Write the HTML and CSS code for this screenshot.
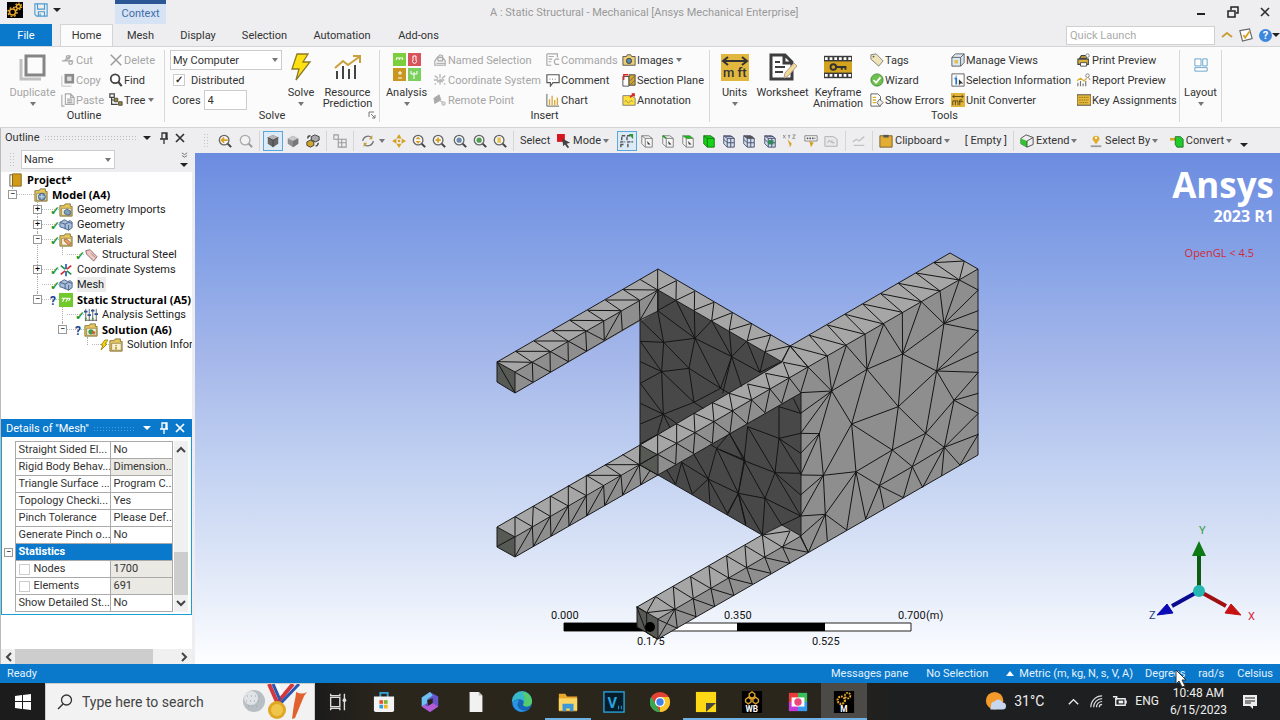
FILE: index.html
```html
<!DOCTYPE html>
<html lang="en">
<head>
    <meta charset="UTF-8">
    <meta name="viewport" content="width=device-width, initial-scale=1.0">
    <title>A : Static Structural - Mechanical [Ansys Mechanical Enterprise]</title>
    <link rel="stylesheet" href="styles.css">
</head>
<body>

    <!-- shared icons -->
    <svg class="sprite" aria-hidden="true">
        <symbol id="gears" viewBox="0 0 16 16">
            <rect width="16" height="16" fill="#000"/>
            <circle cx="5.500" cy="10" r="3" fill="none" stroke="#e7a72c" stroke-width="1.500"/>
            <circle cx="5.500" cy="10" r="4.500" fill="none" stroke="#e7a72c" stroke-width="1.500" stroke-dasharray="1.800 1.730"/>
            <circle cx="11.500" cy="4.500" r="2" fill="none" stroke="#e7a72c" stroke-width="1.400"/>
            <circle cx="11.500" cy="4.500" r="3.300" fill="none" stroke="#e7a72c" stroke-width="1.200" stroke-dasharray="1.500 1.460"/>
        </symbol>
        <symbol id="save" viewBox="0 0 16 16"><path d="M1 1h14v14H3l-2-2zM4 1v6h8V1M5 15v-5h7v5M7 12v3" fill="none" stroke="#4a9bd0" stroke-width="1.300"/></symbol>
        <symbol id="duplicate" viewBox="0 0 28 28"><path d="M2 6v20h20" fill="none" stroke="#c0c0c0" stroke-width="3"/><path d="M7 3h18v19H7z" fill="#fbfbfb" stroke="#858585" stroke-width="3"/></symbol>
        <symbol id="cut" viewBox="0 0 16 16"><path d="M1 9h13M4 9l7-6" stroke="#aaa" stroke-width="1.600"/><circle cx="8" cy="5" r="2" fill="none" stroke="#aaa" stroke-width="1.500"/><circle cx="11" cy="11" r="2" fill="none" stroke="#aaa" stroke-width="1.500"/></symbol>
        <symbol id="copy" viewBox="0 0 16 16"><path d="M1 3v12h11" fill="none" stroke="#bbb"/><path d="M4 1h11v11H4z" fill="#8c8c8c"/><path d="M7 4h5v5H7z" fill="#ddd"/></symbol>
        <symbol id="paste" viewBox="0 0 16 16"><path d="M1 2v13h3M5 1h6l4 4v8H5zM11 1v4h4M7 7h6M7 9h6M7 11h6" fill="none" stroke="#aaa" stroke-width="1.300"/></symbol>
        <symbol id="delete" viewBox="0 0 16 16"><path d="M2 2l12 12M14 2L2 14" stroke="#9c9c9c" stroke-width="1.700"/></symbol>
        <symbol id="find" viewBox="0 0 16 16"><circle cx="7" cy="6.500" r="5" fill="#fff" stroke="#444" stroke-width="2"/><path d="M10.500 10l4 5" stroke="#444" stroke-width="2.400"/></symbol>
        <symbol id="tree" viewBox="0 0 16 16"><path d="M1 1h5v4H1zM3 5v8h7M3 8h4" fill="none" stroke="#444" stroke-width="1.400"/><path d="M6 6h4v4H6zM11 10h4v4h-4z" fill="#9c8a30" stroke="#444"/></symbol>
        <symbol id="solve" viewBox="0 0 26 28"><path d="M9 1h11l-5 8h7L8 27l3-11H4z" fill="#ffe010" stroke="#8a7b2c" stroke-width="1.300"/></symbol>
        <symbol id="resource" viewBox="0 0 28 28"><path d="M3 26V18M9 26V13M15 26V16M21 26V12" stroke="#444" stroke-width="2"/><path d="M1 15L9 8l5 4L25 4M19 3h7v7" fill="none" stroke="#c9a03c" stroke-width="2"/></symbol>
        <symbol id="analysis" viewBox="0 0 28 28">
            <path d="M0 0h13v13H0z" fill="#7bcf3c"/><path d="M15 0h13v13H15z" fill="#d9535c"/><path d="M0 15h13v13H0z" fill="#c9961e"/><path d="M15 15h13v13H15z" fill="#7bcf5c"/>
            <path d="M3 5h7M3 7l1-2M6 7l1-2M9 7l1-2M5 20h4M7 18v4M5 25h4M21 26v-7M18 18v3h6v-3" stroke="#fff" fill="none"/><path d="M20 3h3v4a2 2 0 1 1-3 0z" fill="none" stroke="#fff"/>
        </symbol>
        <symbol id="named" viewBox="0 0 16 16"><path d="M2 9l3-4h6l3 4v5H2zM5 5l3-3 3 1v6H6z" fill="#eee" stroke="#aaa" stroke-width="1.200"/><path d="M4 12h10" stroke="#aaa"/></symbol>
        <symbol id="coord" viewBox="0 0 16 16"><path d="M8 1v14M2 3l12 10M14 3L2 13M1 8h14" stroke="#b4b4b4" stroke-width="1.500" stroke-dasharray="5 2"/></symbol>
        <symbol id="remote" viewBox="0 0 16 16"><path d="M1 6l6-4 2 6-7 4zM8 9l4 2" fill="#aaa" stroke="#aaa"/><circle cx="12" cy="12" r="2" fill="#ddd" stroke="#aaa"/></symbol>
        <symbol id="commands" viewBox="0 0 16 16"><path d="M1 1h12v4M1 1v13h5M3 4h6M3 7h4M3 10h3" fill="none" stroke="#aaa" stroke-width="1.400"/><path d="M15 7h-4q-3 3 0 6h4" fill="none" stroke="#aaa" stroke-width="1.400"/></symbol>
        <symbol id="comment" viewBox="0 0 16 16"><path d="M1 2h14v9H8l-3 4v-4H1z" fill="#fff" stroke="#555" stroke-width="1.300"/><path d="M4 7h8" stroke="#555" stroke-dasharray="1 2"/></symbol>
        <symbol id="chart" viewBox="0 0 16 16"><path d="M1 1v14h14" fill="none" stroke="#555"/><path d="M4 14V7M7 14V3M10 14V8M13 14V5" stroke="#d8a733" stroke-width="1.500"/></symbol>
        <symbol id="images" viewBox="0 0 16 16"><path d="M1 4h4l1-2h4l1 2h4v10H1z" fill="#ecd06f" stroke="#4e4e4e"/><circle cx="8" cy="9" r="3" fill="#5b87b0" stroke="#444"/></symbol>
        <symbol id="section" viewBox="0 0 16 16"><path d="M1 4h7v11H1z" fill="#fff" stroke="#444"/><path d="M8 2h7v12H8z" fill="#d3a52a" stroke="#444"/><path d="M9 14l6-6M9 9l6-6" stroke="#666"/><path d="M2 8V2h5" fill="none" stroke="#d22" stroke-width="1.500"/></symbol>
        <symbol id="annotation" viewBox="0 0 16 16"><path d="M1 3h10l4 3v8H1z" fill="#ffe03b" stroke="#777"/><path d="M3 10q2-3 3 0t3 0 3 0" fill="none" stroke="#886"/><path d="M9 5l5-4M11 1h3v3" stroke="#d22" stroke-width="1.500" fill="none"/></symbol>
        <symbol id="units" viewBox="0 0 28 28"><path d="M0 1h28v27H0z" fill="#e2b73e"/><path d="M3 8h22M7 4L2 8l5 4M21 4l5 4-5 4" fill="none" stroke="#333" stroke-width="2"/><text x="2" y="24" font-size="13" font-weight="500" fill="#333">m ft</text></symbol>
        <symbol id="worksheet" viewBox="0 0 28 28"><path d="M2 2h14l7 7v17H2zM15 2v8h8" fill="#fff" stroke="#3e3e3e" stroke-width="3"/><path d="M6 9h5M6 14h10M6 19h8" stroke="#3e3e3e" stroke-width="2"/><path d="M15 25l1-5 9-10 3 3-9 10z" fill="#f0dc94" stroke="#b99"/></symbol>
        <symbol id="keyframe" viewBox="0 0 30 26"><path d="M0 1h30v24H0z" fill="#3a3a3a"/><path d="M0 7h30v12H0z" fill="#d3a31e"/><path d="M1 4h28M1 22h28" stroke="#fff" stroke-width="3" stroke-dasharray="3 2"/><circle cx="10" cy="13" r="3" fill="none" stroke="#333" stroke-width="2"/><path d="M13 13h11M19 13v3M23 13v3" stroke="#333" stroke-width="2"/></symbol>
        <symbol id="tags" viewBox="0 0 16 16"><path d="M1 2l6-1 8 8-5 6-9-8z" fill="#efe3b8" stroke="#777"/><circle cx="4" cy="4" r="1" fill="#555"/></symbol>
        <symbol id="wizard" viewBox="0 0 16 16"><circle cx="8" cy="8" r="7" fill="#6fbf4d" stroke="#3c8a37"/><path d="M4 8l3 3 5-6" fill="none" stroke="#fff" stroke-width="2"/></symbol>
        <symbol id="errors" viewBox="0 0 16 16"><path d="M1 1h8l3 3v11H1z" fill="#fff" stroke="#555"/><path d="M3 5h4M3 8h4M3 11h4" stroke="#d5b62e" stroke-width="1.500"/><path d="M11 7l4 4-4 4-3-4z" fill="#eee" stroke="#555"/></symbol>
        <symbol id="views" viewBox="0 0 16 16"><path d="M1 5l4-4h10v10l-4 4H1zM1 5h10v10M11 5l4-4" fill="#dce8f3" stroke="#555"/><path d="M4 8h4v4H4z" fill="#e0c24b"/></symbol>
        <symbol id="selinfo" viewBox="0 0 16 16"><path d="M1 1h14v14H1z" fill="#fff" stroke="#555"/><path d="M4 6h2v7M6 3v1" stroke="#2676bb" stroke-width="2" fill="none"/><path d="M9 7l5 5-3 0-2 2z" fill="#333"/></symbol>
        <symbol id="converter" viewBox="0 0 16 16"><path d="M0 0h16v16H0z" fill="#e2b43a"/><path d="M2 4h12M4 2L2 4l2 2M12 2l2 2-2 2M2 14V9h3v5M5 9h3v5M10 14V8h3M9 10h5" fill="none" stroke="#544315"/></symbol>
        <symbol id="print" viewBox="0 0 16 16"><path d="M3 6h8V3H5zM1 7h12v6H1z" fill="#d9b13b" stroke="#444" stroke-width="1.200"/><path d="M4 11h7v4H4z" fill="#fff" stroke="#444"/><circle cx="12" cy="3" r="2" fill="#fff" stroke="#777"/></symbol>
        <symbol id="report" viewBox="0 0 16 16"><path d="M1 15v-4M4 15v-6M7 15v-3M10 15V9" stroke="#777" stroke-width="1.300"/><path d="M0 9l4-3 4 3 3-3" fill="none" stroke="#d7ac30" stroke-width="1.400"/><circle cx="12" cy="3" r="2" fill="#fff" stroke="#777"/><path d="M13 5l2 3" stroke="#777"/></symbol>
        <symbol id="keys" viewBox="0 0 16 16"><path d="M0 2h16v12H0z" fill="#e5b93c" stroke="#444"/><path d="M2 5h12M2 8h12M3 11h10" stroke="#705000" stroke-dasharray="1 1"/></symbol>
        <symbol id="layout" viewBox="0 0 16 16"><path d="M1 1h7v8H1zM10 1h5v8h-5zM1 11h14v4H1z" fill="#fff" stroke="#5b9cc8"/></symbol>

        <symbol id="mag" viewBox="0 0 16 16"><path d="M11 11l4 4" stroke="#444" stroke-width="2.400"/><circle cx="7" cy="7" r="5.500" fill="#f6f6f6" stroke="#666" stroke-width="1.500"/></symbol>
        <symbol id="cube" viewBox="0 0 16 16"><path d="M8 1l6 3v7l-6 4-6-4V4z" fill="#666"/><path d="M2 4l6 3 6-3-6-3z" fill="#b5b5b5"/><path d="M2 4l6 3v8M8 7l6-3" fill="none" stroke="#444"/></symbol>
        <symbol id="cube-light" viewBox="0 0 16 16"><path d="M8 2l6 3v6l-6 4-6-4V5z" fill="#8f8f8f"/><path d="M2 5l6 3 6-3-6-3z" fill="#c8c8c8"/><path d="M8 8l6-3v6l-6 4z" fill="#777"/></symbol>
        <symbol id="cubes" viewBox="0 0 16 16"><path d="M6 3l4-2 5 2v4l-4 2-5-2z" fill="#aaa" stroke="#333"/><path d="M1 9l4-2 4 2v4l-4 2-4-2z" fill="#d0a72c" stroke="#333"/><path d="M2 5q0-3 3-3M14 10q0 3-3 4" fill="none" stroke="#444" stroke-width="1.500"/></symbol>
        <symbol id="snap" viewBox="0 0 16 16"><path d="M1 1h5v5H1zM6 6h9v9H6zM6 10h9M10 6v9" fill="none" stroke="#999" stroke-width="1.200"/></symbol>
        <symbol id="rotate" viewBox="0 0 16 16"><path d="M2 8a6 6 0 0 1 10-4M14 8a6 6 0 0 1-10 4" fill="none" stroke="#777" stroke-width="1.500"/><path d="M13 1v5H9zM3 15v-5h4z" fill="#c9a03c"/></symbol>
        <symbol id="pan" viewBox="0 0 16 16"><path d="M8 0l3 5H5zM8 16l3-5H5zM0 8l5-3v6zM16 8l-5-3v6z" fill="#d6a022"/><circle cx="8" cy="8" r="1.500" fill="#d6a022"/></symbol>
        <symbol id="mode" viewBox="0 0 16 16"><path d="M0 0h9v9H0z" fill="#d9161d"/><path d="M6 5l9 5-4 1 3 4-2 1-3-4-2 2z" fill="#444"/></symbol>
        <symbol id="filter" viewBox="0 0 16 16"><path d="M1 15V9h5M1 12h3M2 7V2h5M8 7V2h6M9 15V9h6" fill="none" stroke="#555" stroke-width="1.600" stroke-dasharray="4 1"/><path d="M10 0l5 6V0z" fill="#2b9b38"/></symbol>
        <symbol id="box" viewBox="0 0 16 16"><path d="M2 2h8l4 3v10H6l-4-4z" fill="#f4f4f4" stroke="#777"/><path d="M2 2l4 3h8M6 5v10" fill="none" stroke="#777"/><path d="M8 8l4 4H9z" fill="#333"/></symbol>
        <symbol id="box-green" viewBox="0 0 16 16"><path d="M2 2h8l4 3v10H6l-4-4z" fill="#16d316" stroke="#176d17"/><path d="M2 2l4 3h8M6 5v10" fill="none" stroke="#176d17"/></symbol>
        <symbol id="box-mesh" viewBox="0 0 16 16"><path d="M2 2h8l4 3v10H6l-4-4z" fill="#cfe0ee" stroke="#446"/><path d="M2 2l4 3h8M6 5v10M10 5v10M6 10h8M2 6l4 4M4 3h8" fill="none" stroke="#446"/></symbol>
        <symbol id="xyz" viewBox="0 0 16 16"><path d="M0 1l3 4M3 1L0 5M6 1l1 2 1-2M7 3v2M11 1h3l-3 4h3" stroke="#888" fill="none"/><path d="M5 6l5 5-2 4-1-4z" fill="#d6a022"/></symbol>
        <symbol id="label" viewBox="0 0 16 16"><path d="M1 2h14v6H1z" fill="#fff" stroke="#777"/><path d="M3 5h10" stroke="#555" stroke-width="2" stroke-dasharray="2 1"/><path d="M6 8l5 2-3 5z" fill="#d6a022"/></symbol>
        <symbol id="page-gray" viewBox="0 0 16 16"><path d="M1 3h10l4 3v8H1z" fill="#e8e8e8" stroke="#aaa"/><path d="M4 10l2-3 2 3M9 7v3h3" fill="none" stroke="#aaa"/></symbol>
        <symbol id="trend" viewBox="0 0 16 16"><path d="M1 9l4-3 3 2 6-5M2 13h12" fill="none" stroke="#c2c2c2" stroke-width="1.500"/></symbol>
        <symbol id="clipboard" viewBox="0 0 16 16"><path d="M1 2h14v13H1z" fill="#e2ac35" stroke="#6d5a28"/><path d="M5 1h6v3H5z" fill="#555"/></symbol>
        <symbol id="extend" viewBox="0 0 16 16"><path d="M1 5l6-4 8 3v8l-7 3-7-4z" fill="#eee" stroke="#444"/><path d="M1 5l7 3v7l-7-4z" fill="#2fc52f"/><path d="M8 8l7-4M8 8v7" stroke="#444"/></symbol>
        <symbol id="pin-map" viewBox="0 0 16 16"><path d="M8 12L4 6a4 4 0 1 1 8 0z" fill="#e2ac2a"/><circle cx="8" cy="4.500" r="1.300" fill="#fff"/><path d="M2 14h12" stroke="#999" stroke-width="2"/></symbol>
        <symbol id="convert" viewBox="0 0 16 16"><path d="M0 6h6" stroke="#d8a622" stroke-width="3"/><path d="M6 3h6l3 3v9H8l-2-3z" fill="#1fcb2a" stroke="#276b27"/></symbol>

        <symbol id="project" viewBox="0 0 16 16"><path d="M1 2h3v13H1z" fill="#fff7d6" stroke="#555"/><path d="M4 1h10v14H4z" fill="#d19a17" stroke="#80641c"/></symbol>
        <symbol id="folder" viewBox="0 0 16 16"><path d="M1 3h5l1-2h6v3h2v11H1z" fill="#e8c65c" stroke="#80733c"/><path d="M3 6h11v8H3z" fill="#f7f1da" stroke="#9b8c50"/></symbol>
        <symbol id="blocks" viewBox="0 0 16 16"><path d="M1 5l5-3 4 2 3-1 2 2v6l-4 3-4-2-6-2z" fill="#a9bfdc" stroke="#405a80"/><path d="M1 5l6 2v6M7 7l4-2 4 1M11 8v6" fill="none" stroke="#405a80"/></symbol>
        <symbol id="tag-pink" viewBox="0 0 16 16"><path d="M2 3l5-1 8 8-4 5-8-8z" fill="#ecc8c4" stroke="#866"/><path d="M8 6l5 5" stroke="#a77"/></symbol>
        <symbol id="axes" viewBox="0 0 16 16"><path d="M8 7V1M8 9v6" stroke="#2a66c0" stroke-width="2"/><path d="M9 7l5-4M7 9l-5 4" stroke="#d03030" stroke-width="2"/><path d="M7 7L2 3M9 9l5 4" stroke="#27944a" stroke-width="2"/></symbol>
        <symbol id="static" viewBox="0 0 16 16"><path d="M0 0h16v16H0z" fill="#71c92c"/><path d="M3 6h10M4 10l2-4M8 10l2-4M11 9l2-3" stroke="#fff" stroke-width="1.300"/></symbol>
        <symbol id="settings" viewBox="0 0 16 16"><path d="M2 1v14M6 1v14M10 1v14M14 1v14M1 14h14" stroke="#555"/><path d="M0 4h4M4 8h4M8 3h4M12 7h4" stroke="#23569a" stroke-width="2"/><path d="M1 12h2M9 12h2" stroke="#3a9a3a" stroke-width="2"/></symbol>
        <symbol id="pin" viewBox="0 0 12 12"><path d="M4 1h5v6H4zM2 7h8M6 7v5M8 1v6" fill="none" stroke="currentColor" stroke-width="1.300"/></symbol>
        <symbol id="close" viewBox="0 0 12 12"><path d="M2 2l8 8M10 2l-8 8" stroke="currentColor" stroke-width="1.700"/></symbol>
    </svg>

    <header class="titlebar">
        <div class="quick-access">
            <svg class="app-icon"><use href="#gears"/></svg>
            <button class="icon-btn" aria-label="Save"><svg class="ico"><use href="#save"/></svg></button>
            <span class="caret caret-dark"></span>
        </div>
        <div class="context-tab">Context</div>
        <div class="window-title">A : Static Structural - Mechanical [Ansys Mechanical Enterprise]</div>
        <div class="window-buttons">
            <button aria-label="Minimize"><svg class="ico-s" viewBox="0 0 12 12"><path d="M2 8h8" stroke="#222" stroke-width="2"/></svg></button>
            <button aria-label="Restore"><svg class="ico-s" viewBox="0 0 12 12"><path d="M1 5h7v6H1zM4 4V1h7v6H9" fill="none" stroke="#222" stroke-width="1.500"/></svg></button>
            <button aria-label="Close"><svg class="ico-s"><use href="#close"/></svg></button>
        </div>
    </header>

    <nav class="tabs">
        <button class="tab tab-file">File</button>
        <button class="tab tab-home">Home</button>
        <button class="tab tab-mesh">Mesh</button>
        <button class="tab tab-display">Display</button>
        <button class="tab tab-selection">Selection</button>
        <button class="tab tab-automation">Automation</button>
        <button class="tab tab-addons">Add-ons</button>
        <div class="tab-tools">
            <input class="quick-launch" type="text" placeholder="Quick Launch" aria-label="Quick Launch">
            <svg class="ico-s" viewBox="0 0 12 12"><path d="M1 8l5-4 5 4" fill="none" stroke="#c9a03c" stroke-width="2"/></svg>
            <svg class="ico" viewBox="0 0 16 16"><path d="M1 3l11-2 3 11-11 3z" fill="#fff" stroke="#666" stroke-width="1.300"/><path d="M5 8l2 3 5-7" fill="none" stroke="#d6a022" stroke-width="2"/></svg>
            <span class="help">?</span><span class="caret caret-dark"></span>
        </div>
    </nav>

    <section class="ribbon">
        <div class="group group-outline">
            <button class="big disabled"><svg class="ico-big"><use href="#duplicate"/></svg>Duplicate<span class="caret"></span></button>
            <div class="stack">
                <button class="small disabled"><svg class="ico"><use href="#cut"/></svg>Cut</button>
                <button class="small disabled"><svg class="ico"><use href="#copy"/></svg>Copy</button>
                <button class="small disabled"><svg class="ico"><use href="#paste"/></svg>Paste</button>
            </div>
            <div class="stack">
                <button class="small disabled"><svg class="ico"><use href="#delete"/></svg>Delete</button>
                <button class="small"><svg class="ico"><use href="#find"/></svg>Find</button>
                <button class="small"><svg class="ico"><use href="#tree"/></svg>Tree<span class="caret"></span></button>
            </div>
            <div class="group-label">Outline</div>
        </div>

        <div class="group group-solve">
            <div class="stack solve-form">
                <div class="combo"><select aria-label="Solve target"><option>My Computer</option></select><span class="caret"></span></div>
                <label class="check-row"><input type="checkbox" checked>Distributed</label>
                <label class="cores-row">Cores <input type="text" value="4"></label>
            </div>
            <button class="big"><svg class="ico-big"><use href="#solve"/></svg>Solve<span class="caret"></span></button>
            <button class="big"><svg class="ico-big"><use href="#resource"/></svg>Resource<br>Prediction</button>
            <div class="group-label">Solve</div>
            <svg class="launcher" viewBox="0 0 8 8"><path d="M1 6V1h5M3 3l4 4M7 4v3H4" fill="none" stroke="#777"/></svg>
        </div>

        <div class="group group-insert">
            <button class="big"><svg class="ico-big"><use href="#analysis"/></svg>Analysis<span class="caret"></span></button>
            <div class="stack">
                <button class="small disabled"><svg class="ico"><use href="#named"/></svg>Named Selection</button>
                <button class="small disabled"><svg class="ico"><use href="#coord"/></svg>Coordinate System</button>
                <button class="small disabled"><svg class="ico"><use href="#remote"/></svg>Remote Point</button>
            </div>
            <div class="stack">
                <button class="small disabled"><svg class="ico"><use href="#commands"/></svg>Commands</button>
                <button class="small"><svg class="ico"><use href="#comment"/></svg>Comment</button>
                <button class="small"><svg class="ico"><use href="#chart"/></svg>Chart</button>
            </div>
            <div class="stack">
                <button class="small"><svg class="ico"><use href="#images"/></svg>Images<span class="caret"></span></button>
                <button class="small"><svg class="ico"><use href="#section"/></svg>Section Plane</button>
                <button class="small"><svg class="ico"><use href="#annotation"/></svg>Annotation</button>
            </div>
            <div class="group-label">Insert</div>
        </div>

        <div class="group group-tools">
            <button class="big"><svg class="ico-big"><use href="#units"/></svg>Units<span class="caret"></span></button>
            <button class="big"><svg class="ico-big"><use href="#worksheet"/></svg>Worksheet</button>
            <button class="big"><svg class="ico-big"><use href="#keyframe"/></svg>Keyframe<br>Animation</button>
            <div class="stack">
                <button class="small"><svg class="ico"><use href="#tags"/></svg>Tags</button>
                <button class="small"><svg class="ico"><use href="#wizard"/></svg>Wizard</button>
                <button class="small"><svg class="ico"><use href="#errors"/></svg>Show Errors</button>
            </div>
            <div class="stack">
                <button class="small"><svg class="ico"><use href="#views"/></svg>Manage Views</button>
                <button class="small"><svg class="ico"><use href="#selinfo"/></svg>Selection Information</button>
                <button class="small"><svg class="ico"><use href="#converter"/></svg>Unit Converter</button>
            </div>
            <div class="stack">
                <button class="small"><svg class="ico"><use href="#print"/></svg>Print Preview</button>
                <button class="small"><svg class="ico"><use href="#report"/></svg>Report Preview</button>
                <button class="small"><svg class="ico"><use href="#keys"/></svg>Key Assignments</button>
            </div>
            <div class="group-label">Tools</div>
        </div>

        <div class="group group-layout">
            <button class="big"><span class="ico-pad"><svg class="ico"><use href="#layout"/></svg></span>Layout<span class="caret"></span></button>
        </div>
    </section>

    <main class="workspace">
        <aside class="sidebar">
            <div class="panel-head">
                <span>Outline</span><span class="grip-fill"></span><span class="caret caret-dark"></span>
                <svg class="ico-s"><use href="#pin"/></svg><svg class="ico-s"><use href="#close"/></svg>
            </div>
            <div class="filter-row">
                <span class="grip"></span>
                <div class="combo combo-name"><select aria-label="Filter"><option>Name</option></select><span class="caret"></span></div>
                <span class="overflow"><svg viewBox="0 0 8 8"><path d="M1 1l3 2 3-2M1 4l3 2 3-2" fill="none" stroke="#666"/></svg><span class="caret caret-dark"></span></span>
            </div>
            <div class="tree-view">
                <div class="row row-root"><svg class="ico"><use href="#project"/></svg><b>Project*</b></div>
                <ul class="tree">
                    <li>
                        <div class="row"><span class="toggle">−</span><span class="mark"></span><svg class="ico" viewBox="0 0 16 16"><use href="#folder"/><circle cx="9" cy="10" r="4" fill="#6f93b8" stroke="#46617c"/><path d="M6 10h6M9 7v6" stroke="#d9e5ef"/></svg><b>Model (A4)</b></div>
                        <ul>
                            <li><div class="row"><span class="toggle">+</span><span class="mark ok">✓</span><svg class="ico" viewBox="0 0 16 16"><use href="#folder"/><path d="M6 9l3-2 4 2v4l-3 1-4-2z" fill="#7f9dbe" stroke="#46617c"/></svg><span>Geometry Imports</span></div></li>
                            <li><div class="row"><span class="toggle">+</span><span class="mark ok">✓</span><svg class="ico"><use href="#blocks"/></svg><span>Geometry</span></div></li>
                            <li>
                                <div class="row"><span class="toggle">−</span><span class="mark ok">✓</span><svg class="ico" viewBox="0 0 16 16"><use href="#folder"/><path d="M6 7h3l5 5-3 2-5-5z" fill="#e59b62" stroke="#99683f"/></svg><span>Materials</span></div>
                                <ul>
                                    <li><div class="row"><span class="no-toggle"></span><span class="mark ok">✓</span><svg class="ico"><use href="#tag-pink"/></svg><span>Structural Steel</span></div></li>
                                </ul>
                            </li>
                            <li><div class="row"><span class="toggle">+</span><span class="mark ok">✓</span><svg class="ico"><use href="#axes"/></svg><span>Coordinate Systems</span></div></li>
                            <li><div class="row"><span class="no-toggle"></span><span class="mark ok">✓</span><svg class="ico"><use href="#blocks"/></svg><span class="selected">Mesh</span></div></li>
                            <li>
                                <div class="row"><span class="toggle">−</span><span class="mark todo">?</span><svg class="ico"><use href="#static"/></svg><b>Static Structural (A5)</b></div>
                                <ul>
                                    <li><div class="row"><span class="no-toggle"></span><span class="mark ok">✓</span><svg class="ico"><use href="#settings"/></svg><span>Analysis Settings</span></div></li>
                                    <li>
                                        <div class="row"><span class="toggle">−</span><span class="mark todo">?</span><svg class="ico" viewBox="0 0 16 16"><use href="#folder"/><circle cx="8" cy="10" r="3" fill="#3e9c4a"/><circle cx="11" cy="11" r="2" fill="#d0643a"/></svg><b>Solution (A6)</b></div>
                                        <ul>
                                            <li><div class="row"><span class="no-toggle"></span><span class="mark"><svg viewBox="0 0 8 12"><path d="M5 1h3L5 5h2L1 11l2-5H1z" fill="#f5d800" stroke="#a98e1f"/></svg></span><svg class="ico" viewBox="0 0 16 16"><use href="#folder"/><path d="M8 8v1M8 10v3" stroke="#c59a1c" stroke-width="2"/></svg><span>Solution Information</span></div></li>
                                        </ul>
                                    </li>
                                </ul>
                            </li>
                        </ul>
                    </li>
                </ul>
            </div>

            <div class="details">
                <div class="panel-head panel-head-active">
                    <span>Details of "Mesh"</span><span class="grip-fill"></span><span class="caret"></span>
                    <svg class="ico-s"><use href="#pin"/></svg><svg class="ico-s"><use href="#close"/></svg>
                </div>
                <div class="details-body">
                    <table>
                        <tr><td class="gutter"></td><td class="key">Straight Sided El...</td><td>No</td></tr>
                        <tr><td class="gutter"></td><td class="key">Rigid Body Behav...</td><td class="readonly">Dimension...</td></tr>
                        <tr><td class="gutter"></td><td class="key">Triangle Surface ...</td><td>Program C...</td></tr>
                        <tr><td class="gutter"></td><td class="key">Topology Checki...</td><td>Yes</td></tr>
                        <tr><td class="gutter"></td><td class="key">Pinch Tolerance</td><td>Please Def...</td></tr>
                        <tr><td class="gutter"></td><td class="key">Generate Pinch o...</td><td>No</td></tr>
                        <tr><td class="gutter"><span class="toggle">−</span></td><th colspan="2">Statistics</th></tr>
                        <tr><td class="gutter"></td><td class="key"><label><input type="checkbox">Nodes</label></td><td class="readonly">1700</td></tr>
                        <tr><td class="gutter"></td><td class="key"><label><input type="checkbox">Elements</label></td><td class="readonly">691</td></tr>
                        <tr><td class="gutter"></td><td class="key">Show Detailed St...</td><td>No</td></tr>
                    </table>
                    <div class="vscroll">
                        <svg class="ico-s" viewBox="0 0 12 12"><path d="M2 8l4-4 4 4" fill="none" stroke="#444" stroke-width="2"/></svg>
                        <span class="vthumb"></span>
                        <svg class="ico-s" viewBox="0 0 12 12"><path d="M2 4l4 4 4-4" fill="none" stroke="#444" stroke-width="2"/></svg>
                    </div>
                </div>
            </div>
            <div class="hscroll">
                <svg class="ico-s" viewBox="0 0 12 12"><path d="M8 2L4 6l4 4" fill="none" stroke="#444" stroke-width="2"/></svg>
                <span class="hthumb"></span>
                <svg class="ico-s" viewBox="0 0 12 12"><path d="M4 2l4 4-4 4" fill="none" stroke="#444" stroke-width="2"/></svg>
            </div>
        </aside>

        <section class="graphics">
            <div class="toolbar">
                <span class="grip"></span>
                <div class="tools tools-2">
                    <button class="tool" aria-label="Previous view"><svg class="ico" viewBox="0 0 16 16"><use href="#mag"/><path d="M11 7H4M7 4L4 7l3 3" fill="none" stroke="#d6a022" stroke-width="2"/></svg></button>
                    <button class="tool faded" aria-label="Next view"><svg class="ico"><use href="#mag"/></svg></button>
                </div>
                <div class="tools tools-3">
                    <button class="tool active" aria-label="Shaded with edges"><svg class="ico"><use href="#cube"/></svg></button>
                    <button class="tool" aria-label="Shaded"><svg class="ico"><use href="#cube-light"/></svg></button>
                    <button class="tool" aria-label="Random colors"><svg class="ico"><use href="#cubes"/></svg></button>
                </div>
                <div class="tools tools-1"><button class="tool" aria-label="Snap"><svg class="ico"><use href="#snap"/></svg></button></div>
                <div class="tools tools-view">
                    <button class="tool tool-wide" aria-label="Rotate"><svg class="ico"><use href="#rotate"/></svg><span class="caret"></span></button>
                    <button class="tool" aria-label="Pan"><svg class="ico"><use href="#pan"/></svg></button>
                    <button class="tool" aria-label="Zoom"><svg class="ico" viewBox="0 0 16 16"><use href="#mag"/><path d="M7 3l3 3H4zM7 11l3-3H4z" fill="#d6a022"/></svg></button>
                    <button class="tool" aria-label="Box zoom"><svg class="ico" viewBox="0 0 16 16"><use href="#mag"/><path d="M4 7h6M7 4v6" stroke="#d6a022" stroke-width="2"/></svg></button>
                    <button class="tool" aria-label="Fit"><svg class="ico" viewBox="0 0 16 16"><use href="#mag"/><circle cx="7" cy="7" r="3" fill="#6b8caf"/></svg></button>
                    <button class="tool" aria-label="Look at"><svg class="ico" viewBox="0 0 16 16"><use href="#mag"/><circle cx="7" cy="7" r="3" fill="#4fa04f"/></svg></button>
                    <button class="tool" aria-label="Magnifier"><svg class="ico" viewBox="0 0 16 16"><use href="#mag"/><path d="M5 4h4v6H5z" fill="#e6c34a"/></svg></button>
                </div>
                <div class="tools tools-select">
                    <span>Select</span>
                    <button class="tool-text"><svg class="ico"><use href="#mode"/></svg>Mode<span class="caret"></span></button>
                </div>
                <div class="tools tools-filters">
                    <button class="tool active" aria-label="Smart select"><svg class="ico"><use href="#filter"/></svg></button>
                    <button class="tool" aria-label="Vertex"><svg class="ico"><use href="#box"/></svg></button>
                    <button class="tool" aria-label="Edge"><svg class="ico" viewBox="0 0 16 16"><use href="#box"/><path d="M2 2l4 3" stroke="#2a9b2a" stroke-width="2"/></svg></button>
                    <button class="tool" aria-label="Face"><svg class="ico" viewBox="0 0 16 16"><use href="#box"/><path d="M2 2h8l4 3H6z" fill="#20b520"/></svg></button>
                    <button class="tool" aria-label="Body"><svg class="ico"><use href="#box-green"/></svg></button>
                    <button class="tool" aria-label="Node"><svg class="ico"><use href="#box-mesh"/></svg></button>
                    <button class="tool" aria-label="Element face"><svg class="ico" viewBox="0 0 16 16"><use href="#box-mesh"/><path d="M2 2h8l4 3H6z" fill="#555"/></svg></button>
                    <button class="tool" aria-label="Element"><svg class="ico" viewBox="0 0 16 16"><use href="#box-mesh"/><path d="M6 7h6v5H6z" fill="#2e8b57"/></svg></button>
                    <button class="tool" aria-label="Coordinates"><svg class="ico"><use href="#xyz"/></svg></button>
                    <button class="tool" aria-label="Label"><svg class="ico"><use href="#label"/></svg></button>
                    <button class="tool" aria-label="Annotation"><svg class="ico"><use href="#page-gray"/></svg></button>
                </div>
                <div class="tools tools-1"><button class="tool" aria-label="Graph"><svg class="ico"><use href="#trend"/></svg></button></div>
                <div class="tools tools-clip">
                    <button class="tool-text"><svg class="ico"><use href="#clipboard"/></svg>Clipboard<span class="caret"></span></button>
                    <span>[ Empty ]</span>
                </div>
                <div class="tools tools-last">
                    <button class="tool-text"><svg class="ico"><use href="#extend"/></svg>Extend<span class="caret"></span></button>
                    <button class="tool-text"><svg class="ico"><use href="#pin-map"/></svg>Select By<span class="caret"></span></button>
                    <button class="tool-text"><svg class="ico"><use href="#convert"/></svg>Convert<span class="caret"></span></button>
                </div>
                <span class="caret caret-dark caret-end"></span>
            </div>

            <div class="viewport">
                <div class="brand">
                    <div class="brand-name">Ansys</div>
                    <div class="brand-release">2023 R1</div>
                    <div class="gl-warning">OpenGL &lt; 4.5</div>
                </div>

                <svg class="scene" viewBox="195 153 1085 511" role="img" aria-label="Meshed chair model">
                    <!-- ruler -->
                    <path d="M564 623h347v8H564z" fill="#fff" stroke="#222"/>
                    <path d="M564 623h87v8h-87zM737 623h88v8h-88z" fill="#000"/>
                    <g class="ruler-text">
                        <text x="551" y="619">0.000</text><text x="724" y="619">0.350</text><text x="898" y="619">0.700</text><text x="926" y="619">(m)</text>
                        <text x="637" y="645">0.175</text><text x="812" y="645">0.525</text>
                    </g>

                    <!-- faces -->
                    <g class="faces">
                        <path class="dark" d="M658 290L782 362 801 372V536L782 525 762 535 658 475 640 464V320L658 310z"/>
                        <path class="top" d="M497 362L658 269V290L515 372z"/>
                        <path class="front" d="M515 372L658 290V311L515 393z"/>
                        <path class="end" d="M497 362L515 372V393L497 382z"/>
                        <path class="top" d="M658 269L790 346 782 362 658 290z"/>
                        <path class="top" d="M497 527L640 445 782 362 790 346 950 253 978 269 808 367 658 455 515 537z"/>
                        <path class="front" d="M515 537L658 455 808 367 801 393 658 475 515 557z"/>
                        <path class="end" d="M497 527L515 537V557L497 547z"/>
                        <path class="end" d="M640 445L658 455V475L640 465z"/>
                        <path class="front" d="M808 367L978 269V455L658 639V619L801 536V393z"/>
                        <path class="top" d="M637 607L762 535 782 525 801 536 658 619z"/>
                        <path class="end" d="M637 607L658 619V639L637 627z"/>
                    </g>

                    <!-- element edges, rear half -->
                    <g class="edges" transform="translate(480 240) scale(.3333)">
                        <path d="M51 365L157 367 107 334 210 334 162 303 264 303 217 272 317 272 270 241 371 242 323 211 423 212 376 180 478 180 430 149 533 150 480 118M533 150V87"/>
                        <path d="M157 367L159 427M210 334L211 396M264 303L265 365M317 272L320 334M371 242L373 301M423 212L427 271M478 180L480 240M105 397L159 427M157 367L211 396M210 334L265 365M264 303L320 334M317 272L373 301 423 212M423 212M480 240L533 150M51 365L105 458"/>
                        <path d="M533 150L589 122 588 181 644 154 643 210 702 187 695 242 757 218 748 270 815 250 802 302 872 285 855 335 930 318 905 365"/>
                        <path d="M533 212L588 181 645 295 533 212 551 307 481 240M533 150V212M643 210L645 295 695 242 755 350 748 270M802 302L755 350 645 295 722 445 755 350 840 397 855 335M800 302L840 397 905 365M481 304L551 307 645 295 627 385 551 307 545 395 481 304M481 365L545 395 481 430 550 523 545 395 627 385 642 487 550 523 481 490M545 395L642 487 722 445 627 385M550 523L481 552M533 580L550 523 570 563M550 523L590 550M642 487L670 505M722 445L748 460M755 350L728 460M755 350L785 440"/>
                        <path d="M533 583V643M533 583L590 610 590 552 645 578 642 520 702 545 697 488 758 513 748 460 815 480 803 432 870 447 857 400 928 414 910 367 985 382 930 318M480 612L533 583"/>
                        <path d="M533 643L587 673 590 610 640 640 645 578 697 610 702 545 750 580 758 513 802 552 815 480 855 518 870 447 905 490 928 414 962 458 985 382"/>
                    </g>

                    <!-- element edges, lower legs -->
                    <g class="edges" transform="translate(480 430) scale(.3333)">
                        <path d="M105 320V260L157 290 160 229 211 259V198L265 228V167L319 197V136L371 167M319 136H423L375 104H478L427 73M478 104L480 44"/>
                        <path d="M105 380L157 290 160 350 211 259 213 318 265 228 267 288 319 197 320 258 371 167 374 227 423 136 428 195 478 104 482 165 510 122M478 104L533 135M478 104L533 73M51 350L105 320"/>
                        <path d="M560 120L587 163 605 97 637 192 685 147 605 97M690 220L685 147 742 250 775 190 685 147 640 70M685 147L710 55 690 42M710 55L748 10 795 90 710 55 775 190 795 90M775 190L797 285"/>
                        <path d="M470 530L500 548 527 500 585 538 580 470 640 507 632 440 693 476 687 409 746 444 740 378 800 413 795 347M500 548L585 538M533 568L592 595 585 538 533 628M585 538L648 560 640 507 704 530 693 476 762 497 746 444 817 462 800 413M500 548V608L533 628M470 530L500 608"/>
                        <path d="M795 347L855 383 847 315 908 352M847 315L930 303 908 352M800 413L873 430 855 383 930 400 908 352 985 367 960 318"/>
                    </g>

                    <!-- element edges, seat and front plate -->
                    <g class="edges" transform="translate(720 240) scale(.3333)">
                        <path d="M265 382L210 318 322 348 268 286 379 317 322 255 435 283 375 223 491 252 428 192 547 217 482 161 604 185 535 130 660 153 588 99 718 120 642 68 733 63 718 120"/>
                        <path d="M265 382L335 453 322 348M335 453L379 317 441 388 435 283M441 388L491 252 548 342 547 217M548 342L604 185 672 251 660 153M672 251L718 120 775 150 672 251 775 212M672 251L775 272 650 393 672 251 548 342 650 393 775 335M650 393L775 397 702 481 650 393 535 500 548 342 441 388 335 453 395 552 441 388 535 500 395 552M242 458L335 453 242 520M242 580L335 453 298 581 242 580M535 500L517 630 617 580 535 500M650 393L617 580 702 481 775 460M702 481L775 520M702 481L673 622 617 580"/>
                    </g>
                    <g class="edges" transform="translate(720 400) scale(.3333)">
                        <path d="M242 160L298 101 242 225M298 101L310 226 242 225M242 285L310 226 395 72 408 215 310 226 242 348M395 72L517 150 408 215 316 343 310 226M617 100L577 200 517 150 478 257 408 215 380 390 316 343 242 348M408 215L437 357 478 257 577 200 673 142 608 262 577 200 550 293 478 257 492 325M673 142L665 228M673 142L720 195 775 103 673 142 775 40M242 408L316 343 265 457M316 343L322 422M242 408L265 457"/>
                        <path d="M28 100L72 182 83 80 177 115V20L242 40 220 -5M242 100L177 115 242 160M177 115L165 218 83 80M177 115L242 220 165 218 242 285M0 150L72 182 165 218 135 295 72 182 55 280 135 295 127 405 55 280 22 345M55 280L78 372M242 348L165 218M185 375L135 295 242 348 185 375"/>
                    </g>

                    <!-- outlines -->
                    <g class="outline">
                        <path d="M497 362L658 269 790 346 950 253 978 269V455L658 639 637 627V607L762 535 658 475 515 557 497 547V527L640 445V320L515 393 497 382z"/>
                        <path d="M497 362L515 372 658 290 782 362 640 445M515 372V393M640 320L658 311V290M790 346L782 362M497 527L515 537 808 367 978 269M515 537V557M640 445V465L658 475V455L640 445M658 475L801 393V536L658 619V639M637 607L658 619M762 535L782 525 801 536"/>
                    </g>
                    <circle cx="650" cy="627" r="5" fill="#000"/>
                </svg>

                <svg class="triad" viewBox="0 0 120 120">
                    <path d="M55 72V34" stroke="#0b5d12" stroke-width="4"/><path d="M55 22l7 15H48z" fill="#0d7a16"/>
                    <path d="M55 72L28 87" stroke="#0a0a8f" stroke-width="4"/><path d="M13 96l10-11 6 9z" fill="#0b0bb5" stroke="#0b0bb5"/>
                    <path d="M55 72L82 87" stroke="#9f1010" stroke-width="4"/><path d="M97 96l-10-11-6 9z" fill="#c61212" stroke="#c61212"/>
                    <circle cx="55" cy="72" r="6" fill="#25b8b2"/>
                    <text x="55" y="15" fill="#2f9d3a">Y</text><text x="5" y="100" fill="#223a7a">Z</text><text x="104" y="101" fill="#d22a3a">X</text>
                </svg>
            </div>
        </section>
    </main>

    <footer class="statusbar">
        <span class="ready">Ready</span>
        <span class="s-messages">Messages pane</span>
        <span class="s-selection">No Selection</span>
        <span class="s-units"><span class="caret-up"></span>Metric (m, kg, N, s, V, A)</span>
        <span class="s-angle">Degrees<svg class="cursor" viewBox="0 0 12 18"><path d="M1 1v14l3-3 3 6 3-1-3-6h4z" fill="#fff" stroke="#333"/></svg></span>
        <span class="s-rate">rad/s</span>
        <span>Celsius</span>
    </footer>

    <div class="taskbar">
        <button class="start" aria-label="Start"><svg viewBox="0 0 16 16"><path d="M0 2l7-1v6H0zM8 1l8-1v7H8zM0 8h7v7l-7-1zM8 8h8v8l-8-1z" fill="#fff"/></svg></button>
        <div class="search">
            <svg class="search-icon" viewBox="0 0 16 16"><circle cx="9.500" cy="6" r="5" fill="none" stroke="#333" stroke-width="1.300"/><path d="M6 10l-5 5" stroke="#333" stroke-width="1.500"/></svg>
            <input type="text" placeholder="Type here to search" aria-label="Type here to search">
            <svg class="medal" viewBox="0 0 66 37">
                <circle cx="11" cy="17" r="11" fill="#b8bfc4"/><circle cx="8" cy="14" r="7" fill="#dfe3e6"/><path d="M4 12h14M3 17h16M5 22h12" stroke="#98a1a8" stroke-dasharray="1 3"/>
                <path d="M26 0l8 18M50 0L35 18" stroke="#d4383d" stroke-width="4"/><path d="M30 0l7 16M56 0L37 20" stroke="#2a57b5" stroke-width="3"/><path d="M34 0l5 10" stroke="#fff" stroke-width="2"/>
                <circle cx="34" cy="26" r="9" fill="#dfa724"/><circle cx="34" cy="26" r="6" fill="#f0c64a"/>
                <path d="M53 8q6 3 11 0-3 3-5 9l-7 17-3 1 2-15q2-8 2-12z" fill="#e2602d"/>
            </svg>
        </div>
        <div class="apps">
            <button class="app" aria-label="Task view"><svg viewBox="0 0 24 24"><path d="M4 7h10v10H4zM4 3v2h10V3M4 21v-2h10v2M19 3v18" fill="none" stroke="#ddd" stroke-width="1.500"/><circle cx="19" cy="10" r="2" fill="#ddd"/></svg></button>
            <button class="app" aria-label="Store"><svg viewBox="0 0 24 24"><path d="M8 7V2h8v5" fill="none" stroke="#39a3dd" stroke-width="2"/><path d="M1 6h22v15q0 2-2 2H3q-2 0-2-2z" fill="#f3f3f3"/><path d="M7 10h4v4H7z" fill="#e5532d"/><path d="M12 10h4v4h-4z" fill="#7db52e"/><path d="M7 15h4v4H7z" fill="#2c9be0"/><path d="M12 15h4v4h-4z" fill="#f2b518"/></svg></button>
            <button class="app" aria-label="Microsoft 365"><svg viewBox="0 0 24 24"><path d="M12 1l9 5v11l-9 6-9-6V7z" fill="#6357c9"/><path d="M12 1L3 7v10l6-4V9l6-4z" fill="#6cc2ee"/><path d="M3 17l9 6 9-6-6-4-6 4-3-2z" fill="#b45ad3"/><path d="M9 10l6-2v5l-5 3z" fill="#27231c"/></svg></button>
            <button class="app" aria-label="Document"><svg viewBox="0 0 24 24"><path d="M5 1h10l4 4v18H5z" fill="#f1f1f1"/><path d="M15 1v4h4" fill="#bbb"/></svg></button>
            <button class="app" aria-label="Edge"><svg viewBox="0 0 24 24"><circle cx="12" cy="12" r="11" fill="#1565b8"/><path d="M1 11A11 11 0 0 1 23 11q0 6-7 6-4-1-2-4 0-4-5-4Q3 9 1 13z" fill="#37b9c9"/><path d="M12 1a11 11 0 0 1 11 10q0 6-7 6-4-1-2-4 3-5-2-12z" fill="#55cb6c"/><path d="M9 10q-4 5 0 9 4 4 10 1-5 4-11 2-7-4-6-10 2-3 7-2z" fill="#2b95e5"/></svg></button>
            <button class="app running" aria-label="File Explorer"><svg viewBox="0 0 24 24"><path d="M2 3h7l2 3h11v16H2z" fill="#e8a62b"/><path d="M2 8h20v13H2z" fill="#fbd564"/><path d="M6 22v-8h12v8h-4v-3h-4v3z" fill="#3e97d8"/></svg></button>
            <button class="app" aria-label="Video editor"><svg viewBox="0 0 24 24"><rect x="1" y="1" width="22" height="22" fill="#071c2a" stroke="#29a3dc" stroke-width="1.500"/><text x="5" y="18" font-size="16" font-weight="700" fill="#29a3dc">V</text><path d="M17 16v4M20 16v4" stroke="#29a3dc"/></svg></button>
            <button class="app" aria-label="Chrome"><svg viewBox="0 0 24 24"><circle cx="12" cy="12" r="11" fill="#e34234"/><path d="M2.500 6.500L12 23A11 11 0 0 1 2.500 6.500z" fill="#36a852"/><path d="M12 23A11 11 0 0 0 21.500 6.500H12z" fill="#f9c628"/><path d="M12 23L7 14 2.500 6.500A11 11 0 0 0 12 23z" fill="#36a852"/><circle cx="12" cy="12" r="5.500" fill="#fff"/><circle cx="12" cy="12" r="4" fill="#4081ec"/></svg></button>
            <button class="app running" aria-label="Sticky Notes"><svg viewBox="0 0 24 24"><path d="M1 1h22v22H1z" fill="#fcd914"/><path d="M12 23V13h11z" fill="#444"/></svg></button>
            <button class="app running" aria-label="Workbench"><svg viewBox="0 0 24 24"><path d="M1 0h22v24H1z" fill="#000"/><path d="M12 1l3 2v3l-3 2-3-2V3zM8 7l3 2v3l-3 2-3-2V9zM16 7l3 2v3l-3 2-3-2V9z" fill="none" stroke="#dea12b" stroke-width="1.500"/><text x="5" y="23" font-size="9" font-weight="700" fill="#fff">WB</text></svg></button>
            <button class="app running" aria-label="Recorder"><svg viewBox="0 0 24 24"><path d="M2 2h10v10H2z" fill="#e83b3b"/><path d="M12 2h10v10H12z" fill="#39c058"/><path d="M2 12h10v10H2z" fill="#c43bda"/><path d="M12 12h10v10H12z" fill="#3999ed"/><path d="M5 7h14v10H5z" fill="#fff"/><circle cx="12" cy="12" r="4" fill="#ec4778"/></svg></button>
            <button class="app running current" aria-label="Mechanical"><svg viewBox="0 0 24 24"><path d="M1 0h22v24H1z" fill="#000"/><circle cx="9" cy="10" r="4" fill="none" stroke="#e7a72c" stroke-width="2.400" stroke-dasharray="2 1"/><circle cx="16" cy="5" r="3" fill="none" stroke="#e7a72c" stroke-width="2" stroke-dasharray="2 1"/><text x="8" y="23" font-size="9" font-weight="700" fill="#fff">M</text></svg></button>
        </div>
        <div class="tray">
            <svg class="weather" viewBox="0 0 24 24"><circle cx="11" cy="11" r="10" fill="#f39a2b"/><path d="M6 21h14a4 4 0 0 0 0-8 5 5 0 0 0-9-1 4 4 0 0 0-4 5z" fill="#c7d7ee"/></svg>
            <span class="temp">31°C</span>
            <svg class="tray-icon" viewBox="0 0 16 16"><path d="M3 11l5-5 5 5" fill="none" stroke="#eee" stroke-width="1.500"/></svg>
            <svg class="tray-icon" viewBox="0 0 16 16"><path d="M2 14A12 12 0 0 1 14 2M5 14a9 9 0 0 1 9-9M8 14a6 6 0 0 1 6-6M11 14a3 3 0 0 1 3-3" fill="none" stroke="#ddd" stroke-width="1.300"/></svg>
            <svg class="tray-icon" viewBox="0 0 16 16"><path d="M4 5h10v7H4zM15 7v3M1 3h4v3" fill="none" stroke="#eee" stroke-width="1.500"/><path d="M7 7h5v3H7z" fill="#eee"/></svg>
            <span class="lang">ENG</span>
            <div class="clock">10:48 AM<br>6/15/2023</div>
            <svg class="notify" viewBox="0 0 16 16"><path d="M1 1h14v11h-4v3l-3-3H1z" fill="#eee"/><path d="M3 4h10M3 7h10M3 9h6" stroke="#222"/></svg>
        </div>
    </div>

</body>
</html>
```

FILE: styles.css
```css
* {
    box-sizing: border-box;
}
body {
    margin: 0;
    height: 100vh;
    display: flex;
    flex-direction: column;
    overflow: hidden;
    font-family: Roboto, "Open Sans", sans-serif;
    font-size: 11px;
    line-height: 15px;
    color: #333;
    background-color: #eeeef0;
}
button {
    font: inherit;
    color: inherit;
    background: none;
    border: none;
    padding: 0;
    white-space: nowrap;
}
input,
select {
    font: inherit;
    color: inherit;
}
svg {
    display: block;
    flex: none;
}
.sprite {
    position: absolute;
    width: 0;
    height: 0;
}
.ico {
    width: 14px;
    height: 14px;
}
.ico-s {
    width: 12px;
    height: 12px;
}
.ico-big {
    width: 28px;
    height: 28px;
}
.caret {
    flex: none;
    display: inline-block;
    border: 3px solid transparent;
    border-top: 4px solid #777;
    border-bottom: 0;
}
.caret-dark {
    border-width: 4px;
    border-top-color: #222;
    border-bottom: 0;
}

/* title bar */
.titlebar {
    display: flex;
    height: 24px;
    flex: none;
}
.quick-access {
    width: 115px;
    display: flex;
    align-items: center;
    gap: 5px;
    padding: 0 7px 4px;
}
.app-icon {
    width: 16px;
    height: 16px;
    margin-right: 6px;
}
.context-tab {
    width: 51px;
    background-color: #d5e3f5;
    border-top: 4px solid #2b5797;
    color: #426ea8;
    text-align: center;
    line-height: 20px;
}
.window-title {
    flex: 1;
    padding-left: 324px;
    line-height: 26px;
    color: #999;
}
.window-buttons {
    display: flex;
    align-items: center;
    gap: 20px;
    padding-right: 9px;
}

/* tabs */
.tabs {
    display: flex;
    height: 22px;
    flex: none;
}
.tab {
    height: 22px;
    text-align: center;
}
.tab-file {
    width: 52px;
    margin-right: 8px;
    background-color: #0a79cc;
    color: #fff;
}
.tab-home {
    width: 53px;
    background-color: #fbfbfb;
    border: 1px solid #d4d4d6;
    border-bottom: none;
}
.tab-mesh {
    width: 55px;
}
.tab-display {
    width: 60px;
}
.tab-selection {
    width: 73px;
}
.tab-automation {
    width: 82px;
}
.tab-addons {
    width: 71px;
}
.tab-tools {
    margin-left: auto;
    display: flex;
    align-items: center;
    gap: 6px;
}
.quick-launch {
    width: 149px;
    height: 19px;
    border: 1px solid #d0d0d0;
    background-color: #fff;
    padding: 0 3px;
}
.quick-launch::placeholder {
    color: #aaa;
}
.help {
    width: 13px;
    height: 13px;
    border-radius: 50%;
    background-color: #3d87dc;
    color: #fff;
    font-weight: bold;
    text-align: center;
    line-height: 13px;
}
.help + .caret {
    margin-left: -6px;
}

/* ribbon */
.ribbon {
    display: flex;
    flex: none;
    height: 82px;
    padding-top: 3px;
    background-color: #fbfbfb;
    border-top: 1px solid #d4d4d6;
    border-bottom: 1px solid #d4d4d6;
}
.group {
    position: relative;
    display: grid;
    grid-template-rows: 60px 12px;
    height: 72px;
    border-right: 1px solid #d8d8d8;
    flex: none;
}
.group-label {
    grid-column: 1 / -1;
    grid-row: 2;
    text-align: center;
    line-height: 11px;
}
.group-outline {
    grid-template-columns: 57px 48px 55px;
    padding-left: 4px;
}
.group-solve {
    grid-template-columns: 111px 40px 53px;
    padding: 0 5px;
}
.group-insert {
    grid-template-columns: 53px 113px 76px 87px;
}
.group-tools {
    grid-template-columns: 49px 47px 64px 81px 126px 102px;
}
.group-layout {
    grid-template-columns: 41px;
}
.stack {
    display: flex;
    flex-direction: column;
}
.small {
    height: 20px;
    display: flex;
    align-items: center;
    gap: 1px;
}
.small .caret {
    margin-left: 2px;
}
.big {
    display: flex;
    flex-direction: column;
    align-items: center;
    line-height: 11px;
    padding-top: 3px;
}
.big .ico-big,
.ico-pad {
    margin-bottom: 6px;
}
.big .caret {
    margin-top: 4px;
}
.ico-pad {
    height: 28px;
    padding-top: 5px;
}
.disabled {
    color: #a5a5a5;
}
.combo {
    position: relative;
    width: 112px;
    height: 19px;
}
.solve-form .combo {
    height: 20px;
    flex: none;
}
.combo select {
    appearance: none;
    width: 100%;
    height: 100%;
    background-color: #fff;
    border: 1px solid #ccc;
    border-radius: 0;
    padding: 0 2px;
}
.combo .caret {
    position: absolute;
    right: 4px;
    top: 8px;
}
.check-row,
.cores-row {
    height: 20px;
    display: flex;
    align-items: center;
}
.check-row {
    gap: 6px;
    padding-left: 3px;
}
.check-row input {
    margin: 0;
    width: 12px;
    height: 12px;
    appearance: none;
    background-color: #fff;
    border: 1px solid #ccc;
}
.check-row input:checked::before {
    content: "✓";
    display: block;
    font-size: 10px;
    font-weight: bold;
    line-height: 10px;
    text-align: center;
}
.cores-row {
    gap: 3px;
    padding-left: 2px;
}
.cores-row input {
    width: 43px;
    height: 20px;
    border: 1px solid #ccc;
    padding: 0 3px;
}
.launcher {
    position: absolute;
    right: 3px;
    bottom: 3px;
    width: 8px;
    height: 8px;
}

/* workspace */
.workspace {
    flex: 1;
    min-height: 0;
    display: flex;
}
.sidebar {
    width: 192px;
    margin-right: 3px;
    display: flex;
    flex-direction: column;
    flex: none;
    border-left: 1px solid #bbb;
    background-color: #fff;
}
.panel-head {
    height: 19px;
    flex: none;
    display: flex;
    align-items: center;
    gap: 7px;
    padding: 0 5px 0 4px;
    background-color: #eeeef0;
    white-space: nowrap;
}
.panel-head span:first-child {
    margin-right: -3px;
}
.panel-head .ico-s {
    margin-right: -1px;
}
.panel-head .ico-s:last-child {
    margin-right: 1px;
    margin-left: -2px;
}
.grip-fill {
    flex: 1;
    height: 5px;
    background-image: radial-gradient(#bbb 1px, transparent 1px);
    background-size: 3px 3px;
}
.grip {
    width: 6px;
    height: 16px;
    background-image: radial-gradient(#c4c4c4 1px, transparent 1px);
    background-size: 3px 3px;
}
.filter-row {
    height: 25px;
    flex: none;
    display: flex;
    align-items: center;
    gap: 6px;
    padding: 0 4px 0 8px;
    background-color: #eeeef0;
}
.combo-name {
    width: 94px;
}
.overflow {
    margin-left: auto;
    display: flex;
    flex-direction: column;
    align-items: center;
    gap: 4px;
}
.overflow svg {
    width: 7px;
    height: 7px;
}

/* tree */
.tree-view {
    flex: 1;
    min-height: 0;
    overflow: hidden;
    color: #222;
}
.row {
    height: 15px;
    display: flex;
    align-items: center;
    white-space: nowrap;
}
.row > * {
    flex: none;
}
.row b {
    font-family: "Open Sans", sans-serif;
    color: #000;
}
.row .ico {
    margin-right: 4px;
}
.row-root {
    padding-left: 8px;
}
.tree,
.tree ul {
    list-style: none;
    margin: 0;
    padding: 0;
}
.tree ul {
    margin-left: 25px;
}
.tree li {
    position: relative;
}
.tree li::before {
    content: "";
    position: absolute;
    left: 11px;
    top: 0;
    bottom: 0;
    border-left: 1px dotted #aaa;
}
.tree li:last-child::before {
    bottom: auto;
    height: 8px;
}
.toggle {
    position: relative;
    width: 9px;
    height: 9px;
    flex: none;
    border: 1px solid #999;
    background-color: #fff;
    font-size: 9px;
    line-height: 7px;
    text-align: center;
    color: #000;
}
.row .toggle {
    margin-left: 7px;
}
.no-toggle {
    width: 5px;
    margin-left: 11px;
}
.mark {
    width: 17px;
    height: 15px;
    padding: 2px 0 0 8px;
    background: linear-gradient(90deg, #bbb 50%, transparent 50%) 0 7px / 2px 1px repeat-x;
    font-size: 12px;
    font-weight: bold;
}
.mark svg {
    width: 8px;
    height: 12px;
}
.ok {
    color: #1c9a2e;
}
.todo {
    color: #15448c;
}
.selected {
    background-color: #ececec;
    padding-right: 2px;
}

/* details */
.details {
    flex: none;
    border: 1px solid #19a0cf;
    border-top: none;
}
.panel-head-active {
    height: 18px;
    background-color: #0a79cc;
    color: #fff;
    margin: 0 -1px;
    padding-left: 5px;
}
.panel-head-active .caret {
    border-width: 4px;
    border-top-color: #fff;
    border-bottom: 0;
}
.panel-head-active .grip-fill {
    background-image: radial-gradient(#4aa0dd 1px, transparent 1px);
}
.details-body {
    display: flex;
    padding: 4px 3px 2px 0;
}
.details table {
    width: 171px;
    table-layout: fixed;
    border-collapse: collapse;
}
.details td,
.details th {
    height: 17px;
    padding: 0 0 0 3px;
    border: 1px solid #aaa;
    line-height: 14px;
    white-space: nowrap;
    overflow: hidden;
}
.details td.gutter {
    width: 13px;
    border: none;
    padding: 0 0 0 2px;
}
.details .toggle {
    display: block;
}
.details td.key {
    width: 95px;
}
.details th {
    background-color: #0a79cc;
    color: #fff;
    text-align: left;
}
.details td.readonly {
    background-color: #ebe9e4;
}
.details label {
    display: flex;
    align-items: center;
    gap: 4px;
}
.details input {
    appearance: none;
    width: 11px;
    height: 11px;
    margin: 0;
    border: 1px solid #ccc;
    background-color: #fff;
}
.vscroll {
    margin-left: auto;
    width: 14px;
    display: flex;
    flex-direction: column;
    align-items: center;
    background-color: #f0f0f0;
    padding: 3px 0;
}
.vthumb {
    width: 14px;
    height: 43px;
    margin: auto 0 2px;
    background-color: #cdcdcd;
}
.hscroll {
    height: 15px;
    flex: none;
    margin-top: 34px;
    display: flex;
    align-items: center;
    background-color: #f0f0f0;
    padding: 0 2px;
}
.hthumb {
    width: 138px;
    height: 15px;
    margin-right: auto;
    background-color: #cdcdcd;
}

/* graphics toolbar */
.graphics {
    flex: 1;
    min-width: 0;
    display: flex;
    flex-direction: column;
}
.toolbar {
    height: 25px;
    flex: none;
    display: flex;
    align-items: center;
    padding-left: 8px;
}
.tools {
    display: flex;
    align-items: center;
    justify-content: space-between;
    height: 20px;
    flex: none;
    padding: 0 3px;
    border-right: 1px solid #d5d5d5;
    white-space: nowrap;
}
.tool {
    width: 20px;
    height: 20px;
    display: flex;
    align-items: center;
    justify-content: center;
}
.tool-wide {
    width: 32px;
    gap: 4px;
}
.active {
    border: 1px solid #5aa7dc;
    background-color: #dcebf7;
}
.faded {
    opacity: 0.5;
}
.tool-text {
    display: flex;
    align-items: center;
    gap: 2px;
}
.tools-1 {
    width: 27px;
}
.tools-2 {
    width: 51px;
    padding-left: 6px;
}
.tools-3 {
    width: 67px;
    padding: 0 3px;
}
.tools-view {
    width: 160px;
}
.tools-select {
    width: 101px;
    padding: 0 6px;
    border-right: none;
}
.tools-filters {
    width: 231px;
    padding: 0 4px 0 2px;
}
.tools-clip {
    width: 141px;
    padding: 0 6px;
}
.tools-last {
    width: 223px;
    padding: 0 5px 0 6px;
    border-right: none;
}
.caret-end {
    margin: 9px 0 0 3px;
}

/* model view */
.viewport {
    position: relative;
    flex: 1;
    min-height: 0;
    background: linear-gradient(#6c8ce0, #85a2e6 20%, #a5b7ea 40%, #c0d0f1 60%, #e0e8f8 82%, #fdfeff);
}
.scene {
    width: 100%;
    height: 100%;
}
.ruler-text {
    font-size: 11px;
    fill: #111;
}
.top {
    fill: #a6a6a6;
}
.front {
    fill: #8e8e8e;
}
.dark {
    fill: #484848;
}
.end {
    fill: #575955;
}
.edges path {
    fill: none;
    stroke: #141414;
    stroke-width: 3;
    stroke-linejoin: bevel;
}
.outline path {
    fill: none;
    stroke: #1a1a1a;
    stroke-linejoin: bevel;
}
.brand {
    position: absolute;
    top: 12px;
    right: 6px;
    text-align: right;
    color: #fff;
    font-family: "Open Sans", sans-serif;
    font-weight: bold;
}
.brand-name {
    font-size: 35px;
    line-height: 40px;
}
.brand-release {
    font-size: 16px;
    line-height: 22px;
}
.gl-warning {
    margin: 18px 20px 0 0;
    color: #d22a3a;
    font-size: 11px;
    font-weight: normal;
}
.triad {
    position: absolute;
    right: 16px;
    bottom: 25px;
    width: 120px;
    height: 120px;
    font-size: 11px;
}

/* status bar */
.statusbar {
    height: 19px;
    flex: none;
    display: flex;
    align-items: center;
    background-color: #0a79cc;
    color: #e4f2fc;
    padding: 0 7px;
    white-space: nowrap;
}
.ready {
    margin-right: auto;
}
.s-messages,
.s-selection {
    margin-right: 18px;
}
.s-units {
    display: flex;
    align-items: center;
    gap: 5px;
    margin-right: 12px;
}
.caret-up {
    border: 4px solid transparent;
    border-top: 0;
    border-bottom: 5px solid #fff;
}
.s-angle {
    position: relative;
    margin-right: 13px;
}
.s-rate {
    margin-right: 13px;
}
.cursor {
    position: absolute;
    right: -2px;
    top: 3px;
    width: 12px;
    height: 18px;
    z-index: 1;
}

/* taskbar */
.taskbar {
    height: 37px;
    flex: none;
    display: flex;
    background: linear-gradient(90deg, #1c1c1c 25%, #2b261c 30%, #2b261c 62%, #1e1f20 70%);
    color: #eee;
}
.start {
    width: 45px;
    padding-left: 15px;
}
.start svg {
    width: 16px;
    height: 16px;
}
.search {
    width: 270px;
    display: flex;
    align-items: center;
    padding: 0 5px 0 11px;
    background-color: #f2f2f2;
    border: 1px solid #ccc;
    border-bottom: none;
}
.search-icon {
    width: 16px;
    height: 16px;
}
.search input {
    flex: 1;
    min-width: 0;
    margin-left: 7px;
    border: none;
    background: none;
    font-size: 14px;
}
.search input::placeholder {
    color: #444;
}
.medal {
    width: 66px;
    height: 37px;
}
.apps {
    display: flex;
}
.app {
    width: 46px;
    display: flex;
    align-items: center;
    justify-content: center;
    padding-top: 2px;
    border-bottom: 2px solid transparent;
}
.app svg {
    width: 22px;
    height: 22px;
}
.running {
    border-bottom-color: #6fb1e4;
}
.current {
    background-color: #4b4a47;
}
.tray {
    margin-left: auto;
    display: flex;
    align-items: center;
    padding-right: 22px;
}
.weather {
    width: 21px;
    height: 21px;
    margin-right: 8px;
}
.temp {
    font-size: 14px;
    margin-right: 22px;
}
.tray-icon {
    width: 15px;
    height: 15px;
    margin-right: 8px;
}
.lang {
    font-size: 12px;
    margin-right: 11px;
}
.clock {
    font-size: 12px;
    line-height: 17px;
    text-align: center;
}
.notify {
    width: 16px;
    height: 16px;
    margin-left: 15px;
}
```
